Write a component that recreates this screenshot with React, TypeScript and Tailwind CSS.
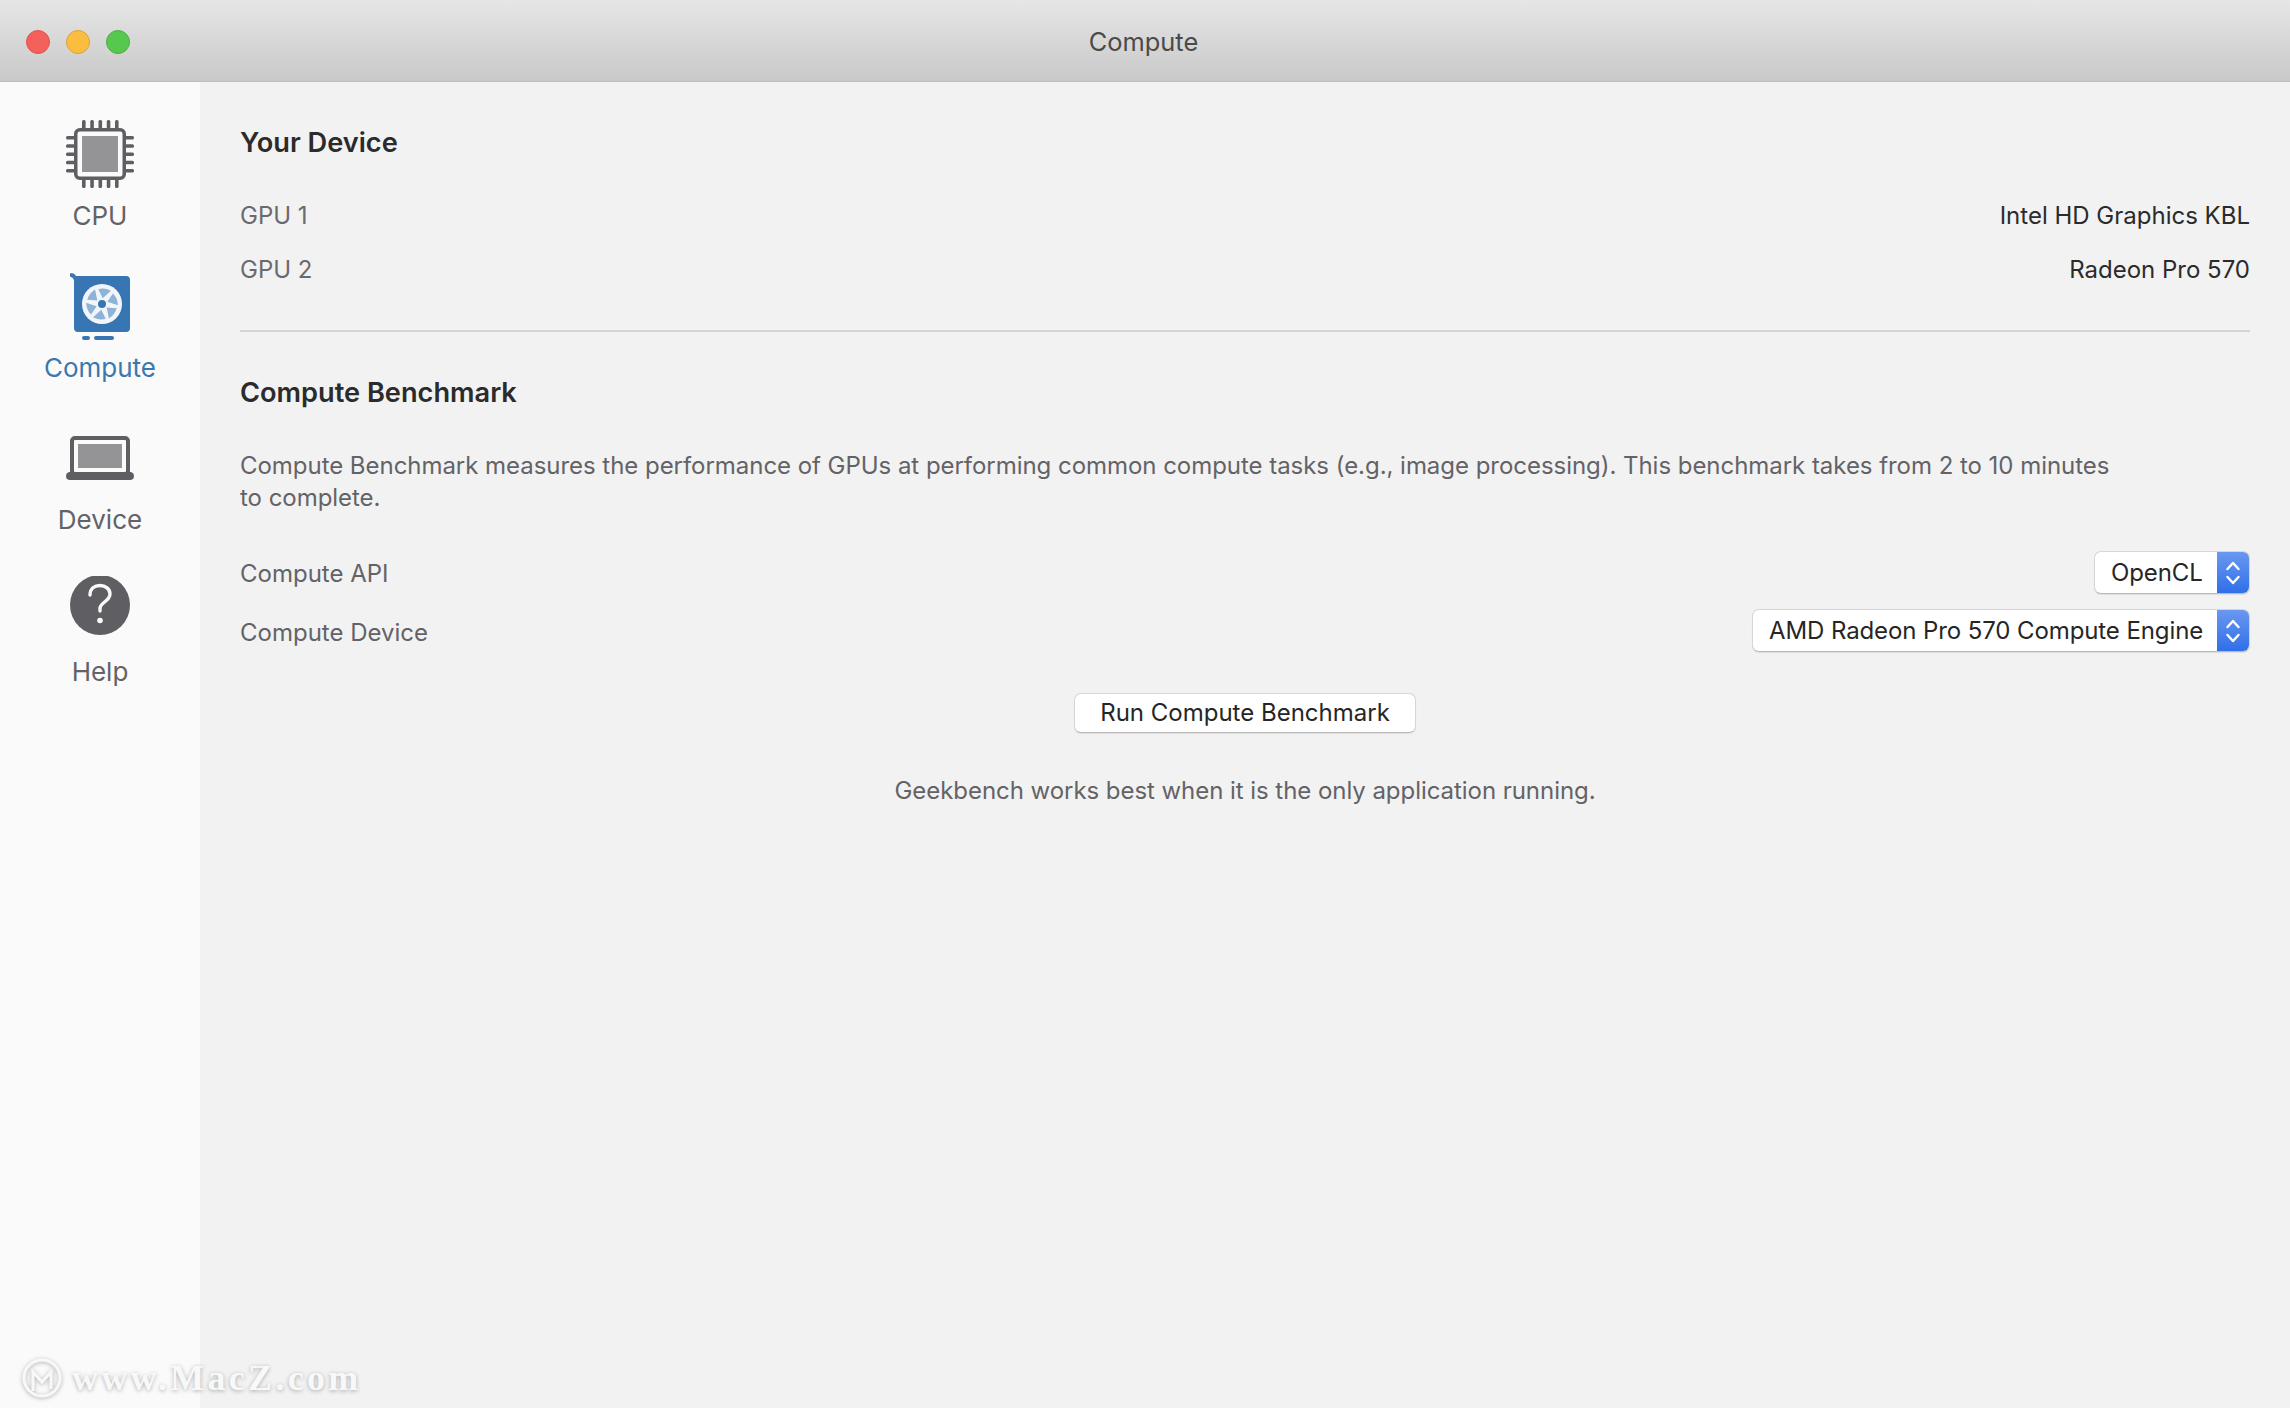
import type { ReactNode } from "react";

function CpuIcon() {
  const pins = [0, 1, 2, 3, 4];
  return (
    <svg width="68" height="68" viewBox="0 0 68 68">
      {pins.map((i) => (
        <g key={i} fill="#5f5f63">
          <rect x={16 + i * 8.25} y="0" width="3.6" height="9" rx="1.5" />
          <rect x={16 + i * 8.25} y="59" width="3.6" height="9" rx="1.5" />
          <rect x="0" y={16 + i * 8.25} width="9" height="3.6" rx="1.5" />
          <rect x="59" y={16 + i * 8.25} width="9" height="3.6" rx="1.5" />
        </g>
      ))}
      <rect x="9.75" y="9.75" width="48.5" height="48.5" rx="4" fill="#fafafa" stroke="#5f5f63" strokeWidth="3.5" />
      <rect x="16" y="16" width="36" height="36" fill="#949497" />
    </svg>
  );
}

function ComputeIcon() {
  const blades = [0, 60, 120, 180, 240, 300];
  return (
    <svg width="68" height="68" viewBox="0 0 68 68">
      <path d="M4 1.5 C7 0.5 9 2 10 4 L60 4 Q64 4 64 8 L64 56 Q64 60 60 60 L12 60 Q8 60 8 56 L8 8 Q7 5 4 4.5 Z" fill="#3776b3" />
      <rect x="16" y="64" width="8" height="4" rx="2" fill="#3776b3" />
      <rect x="28" y="64" width="20" height="4" rx="2" fill="#3776b3" />
      <circle cx="36" cy="32" r="20" fill="#f2f6fa" />
      {blades.map((a) => (
        <path key={a} d="M32.3 17.2 Q38.5 15.5 45 18.8 L36.7 26.2 Z" transform={`rotate(${a} 36 32)`} fill="#8db3d8" />
      ))}
      <circle cx="36" cy="32" r="4" fill="#3776b3" />
    </svg>
  );
}

function DeviceIcon() {
  return (
    <svg width="68" height="68" viewBox="0 0 68 68">
      <rect x="6" y="14" width="56" height="36" rx="3" fill="#fafafa" stroke="#5f5f63" strokeWidth="4" />
      <rect x="12" y="20" width="44" height="24" fill="#949497" />
      <path d="M3 48 L24 48 Q26 48 27 50 Q28 52 30 52 L38 52 Q40 52 41 50 Q42 48 44 48 L65 48 Q68 49 68 52 Q68 56 64 56 L4 56 Q0 56 0 52 Q0 49 3 48 Z" fill="#5f5f63" />
    </svg>
  );
}

function HelpIcon() {
  return (
    <svg width="68" height="68" viewBox="0 0 68 68">
      <circle cx="34" cy="29" r="30" fill="#5f5f63" />
      <path d="M24 19 C24 12.5 28.5 9.5 34 9.5 C39.5 9.5 44 13 44 18 C44 25 35 26 34 32 L34 35" fill="none" stroke="#fafafa" strokeWidth="3.4" strokeLinecap="round" />
      <circle cx="34" cy="44.5" r="2.8" fill="#fafafa" />
    </svg>
  );
}

function NavItem({ icon, label, active }: { icon: ReactNode; label: string; active?: boolean }) {
  return (
    <div className="flex h-[152px] flex-col items-center">
      <div className="flex h-[68px] w-[68px] items-center justify-center">{icon}</div>
      <span className={`mt-[13px] text-[26px] leading-[30px] ${active ? "text-[#3a78ad]" : "text-[#636367]"}`}>{label}</span>
    </div>
  );
}

function Row({ label, value }: { label: string; value: string }) {
  return (
    <div className="flex h-[54px] items-center justify-between">
      <span className="text-[#6a6a6e]">{label}</span>
      <span className="text-[#2b2b2b]">{value}</span>
    </div>
  );
}

function Select({ value, className }: { value: string; className: string }) {
  return (
    <div className={`flex h-[43px] items-stretch overflow-hidden rounded-[7px] border border-[#d6d6d6] border-b-[#b9b9b9] bg-white shadow-[0_1px_1px_rgba(0,0,0,0.08)] ${className}`}>
      <span className="flex flex-1 items-center whitespace-nowrap pl-4 tracking-[-0.1px] text-[#262626]">{value}</span>
      <span className="flex w-8 items-center justify-center bg-gradient-to-b from-[#6a97f0] to-[#2f6fe8]">
        <svg width="16" height="30" viewBox="0 0 16 30" fill="none" stroke="#fff" strokeWidth="2.4" strokeLinecap="round" strokeLinejoin="round">
          <path d="M2.5 11 L8 5 L13.5 11" />
          <path d="M2.5 19 L8 25 L13.5 19" />
        </svg>
      </span>
    </div>
  );
}

export default function App() {
  return (
    <div className="relative flex h-[1408px] w-[2290px] flex-col overflow-hidden bg-[#f2f2f2] font-['Inter',sans-serif] text-[24px]">
      <header className="relative flex h-[82px] items-center justify-center border-b border-[#bdbdbd] bg-gradient-to-b from-[#e6e6e6] to-[#c9c9c9] pr-[3px] pt-1">
        <div className="absolute left-[26px] top-[30px] flex gap-4">
          <span className="h-6 w-6 rounded-full border border-[#e0534c] bg-[#f4605a]" />
          <span className="h-6 w-6 rounded-full border border-[#dfa335] bg-[#fbbd3f]" />
          <span className="h-6 w-6 rounded-full border border-[#4aaf42] bg-[#57c84e]" />
        </div>
        <span className="text-[25.4px] text-[#4a4a4a]">Compute</span>
      </header>

      <div className="flex flex-1">
        <aside className="w-[200px] bg-[#fafafa] pt-[38px]">
          <NavItem icon={<CpuIcon />} label="CPU" />
          <NavItem icon={<ComputeIcon />} label="Compute" active />
          <NavItem icon={<DeviceIcon />} label="Device" />
          <NavItem icon={<HelpIcon />} label="Help" />
        </aside>

        <main className="flex-1 pl-10 pr-10 pt-[41px]">
          <h2 className="text-[27.2px] leading-10 font-semibold text-[#2b2b2b]">Your Device</h2>
          <div className="mt-[26px]">
            <Row label="GPU 1" value="Intel HD Graphics KBL" />
            <Row label="GPU 2" value="Radeon Pro 570" />
          </div>
          <div className="mt-[33px] border-t-2 border-[#d4d4d4]" />
          <h2 className="mt-[41px] text-[27.2px] leading-10 font-semibold text-[#2b2b2b]">Compute Benchmark</h2>
          <p className="mt-[37px] w-[1880px] leading-8 tracking-[-0.04px] text-[#636367]">
            Compute Benchmark measures the performance of GPUs at performing common compute tasks (e.g., image processing). This benchmark takes from 2 to 10 minutes to complete.
          </p>
          <div className="mt-[37px] flex flex-col gap-[15px]">
            <div className="flex items-center justify-between">
              <span className="pt-[3px] text-[#636367]">Compute API</span>
              <Select value="OpenCL" className="w-[156px]" />
            </div>
            <div className="flex items-center justify-between">
              <span className="pt-1 text-[#636367]">Compute Device</span>
              <Select value="AMD Radeon Pro 570 Compute Engine" className="w-[498px]" />
            </div>
          </div>
          <div className="mt-[41px] flex justify-center">
            <button className="h-10 w-[342px] rounded-[7px] border border-[#d6d6d6] border-b-[#b9b9b9] bg-white text-[#262626] shadow-[0_1px_1px_rgba(0,0,0,0.08)]">
              Run Compute Benchmark
            </button>
          </div>
          <p className="mt-[42px] text-center leading-8 tracking-[-0.05px] text-[#636367]">Geekbench works best when it is the only application running.</p>
        </main>
      </div>

      <div className="absolute bottom-[3px] left-[22px] flex items-center gap-[10px] [text-shadow:0_1px_4px_rgba(0,0,0,0.3)]">
        <svg width="40" height="40" viewBox="0 0 40 40" fill="none" stroke="#f8f8f8" strokeWidth="3" className="drop-shadow-[0_1px_2px_rgba(0,0,0,0.3)]">
          <circle cx="20" cy="20" r="18" />
          <path d="M11 33 V14 L20 24 L29 14 V31" />
        </svg>
        <span className="font-['Liberation_Serif',serif] text-[36px] font-bold tracking-[3.3px] text-[#f8f8f8]">www.MacZ.com</span>
      </div>
    </div>
  );
}
